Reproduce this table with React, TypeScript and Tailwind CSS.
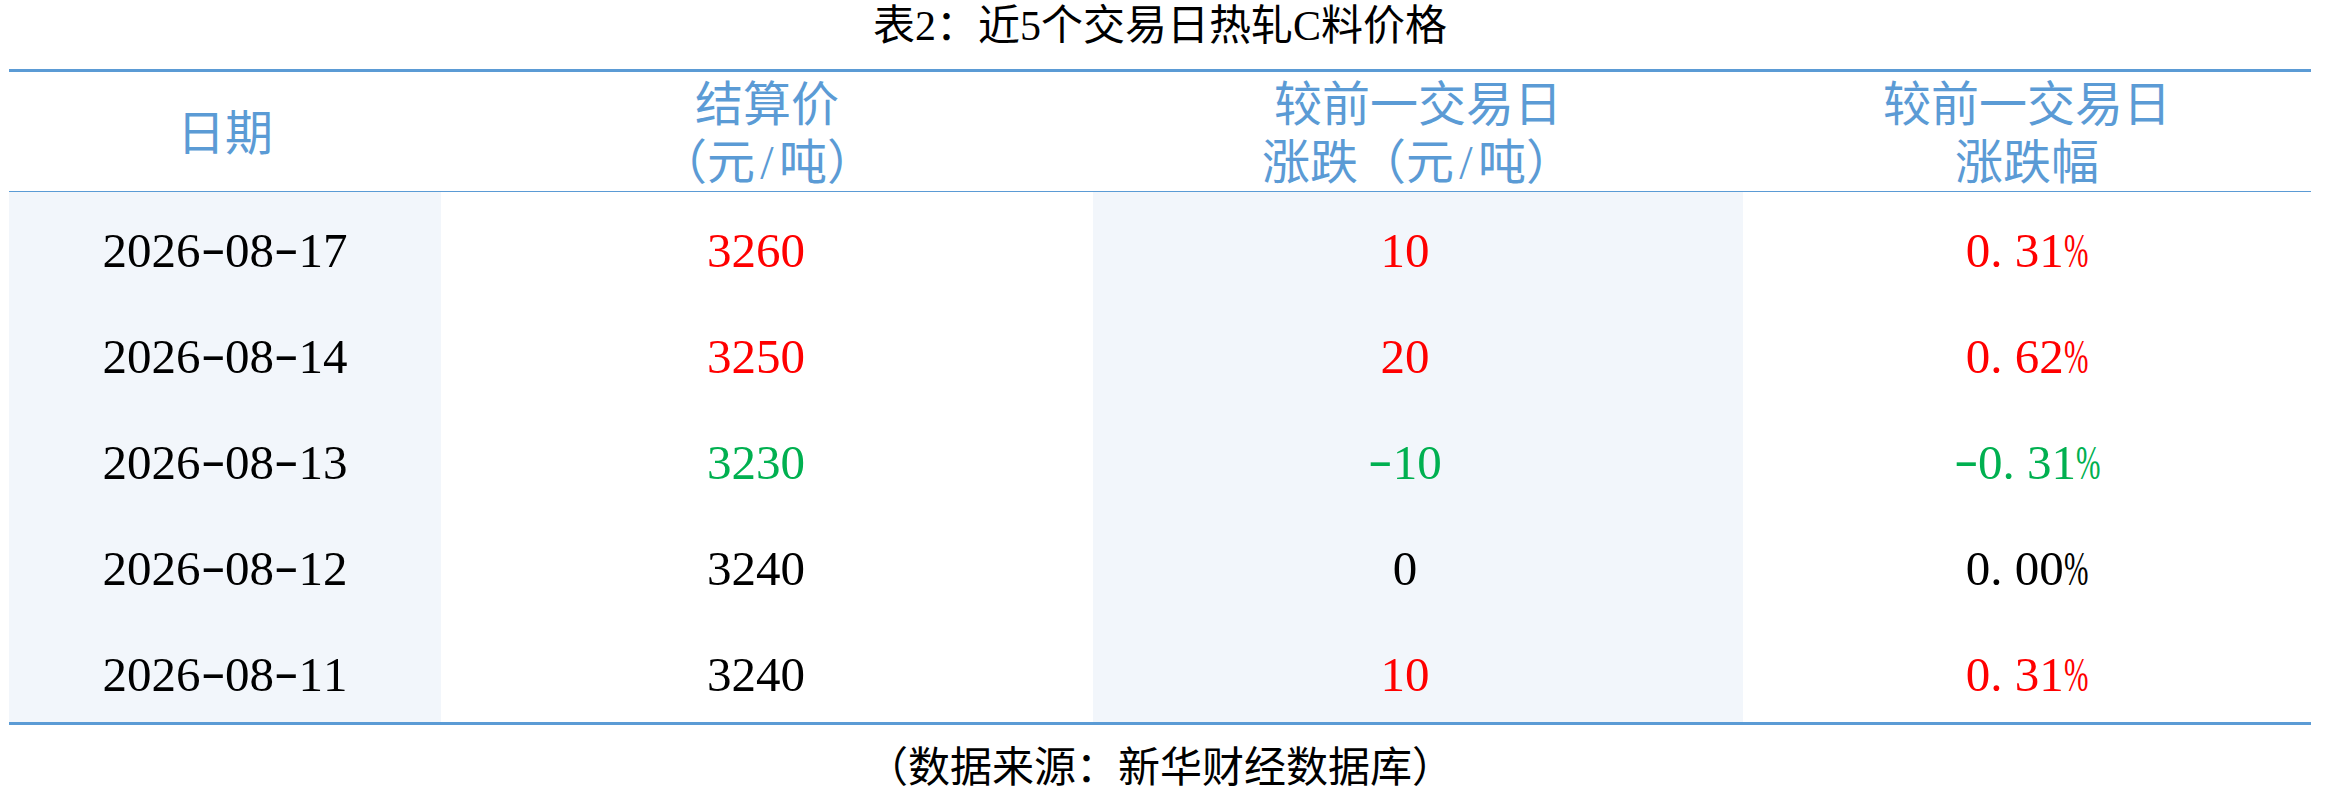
import React from "react";

const FONT = "font-['Liberation_Serif','Noto_Sans_CJK_SC',serif]";

function Mono({ s }: { s: string }) {
  return (
    <span className="inline-flex">
      {s.split("").map((c, i) => {
        let cls = "inline-flex w-[0.5em] justify-center";
        if (c === ".") cls = "inline-flex w-[0.5em] justify-start";
        if (c === "-") cls = "inline-flex w-[0.5em] justify-center scale-x-150 -translate-y-[3px]";
        if (c === "%") cls = "inline-flex w-[0.5em] justify-center scale-x-[0.6]";
        return (
          <span key={i} className={cls}>
            {c}
          </span>
        );
      })}
    </span>
  );
}

function Unit({ prefix }: { prefix?: string }) {
  return (
    <span className="inline-flex">
      {prefix}（元<span className="inline-flex w-[0.5em] justify-center">/</span>吨）
    </span>
  );
}

type Row = {
  date: string;
  price: string;
  pc: string;
  chg: string;
  cc: string;
  pct: string;
};

const RED = "text-[#ff0000]";
const GREEN = "text-[#00b050]";
const BLACK = "text-black";

const rows: Row[] = [
  { date: "2026-08-17", price: "3260", pc: RED, chg: "10", cc: RED, pct: "0.31%" },
  { date: "2026-08-14", price: "3250", pc: RED, chg: "20", cc: RED, pct: "0.62%" },
  { date: "2026-08-13", price: "3230", pc: GREEN, chg: "-10", cc: GREEN, pct: "-0.31%" },
  { date: "2026-08-12", price: "3240", pc: BLACK, chg: "0", cc: BLACK, pct: "0.00%" },
  { date: "2026-08-11", price: "3240", pc: BLACK, chg: "10", cc: RED, pct: "0.31%" },
];

const GRID = "grid grid-cols-[432px_652px_650px_568px]";

export default function App() {
  return (
    <div className={`w-[2341px] h-[797px] bg-white ${FONT}`}>
      <div className="ml-[9px] w-[2302px]">
        <div className="h-[69px] text-center text-[42px] leading-[52px] text-black">
          表2：近5个交易日热轧C料价格
        </div>
        <div className="h-[3px] bg-[#5b9bd5]" />
        <div className={`${GRID} h-[120px] border-b border-[#5b9bd5] text-[48px] leading-[58px] text-[#5b9bd5]`}>
          <div className="flex flex-col items-center justify-center pt-[4px]">
            <span>日期</span>
          </div>
          <div className="flex flex-col items-center justify-center pt-[4px]">
            <span>结算价</span>
            <Unit />
          </div>
          <div className="flex flex-col items-center justify-center pt-[4px]">
            <span>较前一交易日</span>
            <Unit prefix="涨跌" />
          </div>
          <div className="flex flex-col items-center justify-center pt-[4px]">
            <span>较前一交易日</span>
            <span>涨跌幅</span>
          </div>
        </div>
        {rows.map((r) => (
          <div key={r.date} className={`${GRID} h-[106px] text-[49px] leading-[60px]`}>
            <div className="flex items-center justify-center bg-[#f2f6fb] pt-[12px] text-black">
              <Mono s={r.date} />
            </div>
            <div className={`flex items-center justify-center pt-[12px] pr-[22px] ${r.pc}`}>
              <Mono s={r.price} />
            </div>
            <div className={`flex items-center justify-center bg-[#f2f6fb] pt-[12px] pr-[26px] ${r.cc}`}>
              <Mono s={r.chg} />
            </div>
            <div className={`flex items-center justify-center pt-[12px] ${r.cc}`}>
              <Mono s={r.pct} />
            </div>
          </div>
        ))}
        <div className="h-[3px] bg-[#5b9bd5]" />
        <div className="pt-[17px] text-center text-[42px] leading-[52px] text-black">
          （数据来源：新华财经数据库）
        </div>
      </div>
    </div>
  );
}
